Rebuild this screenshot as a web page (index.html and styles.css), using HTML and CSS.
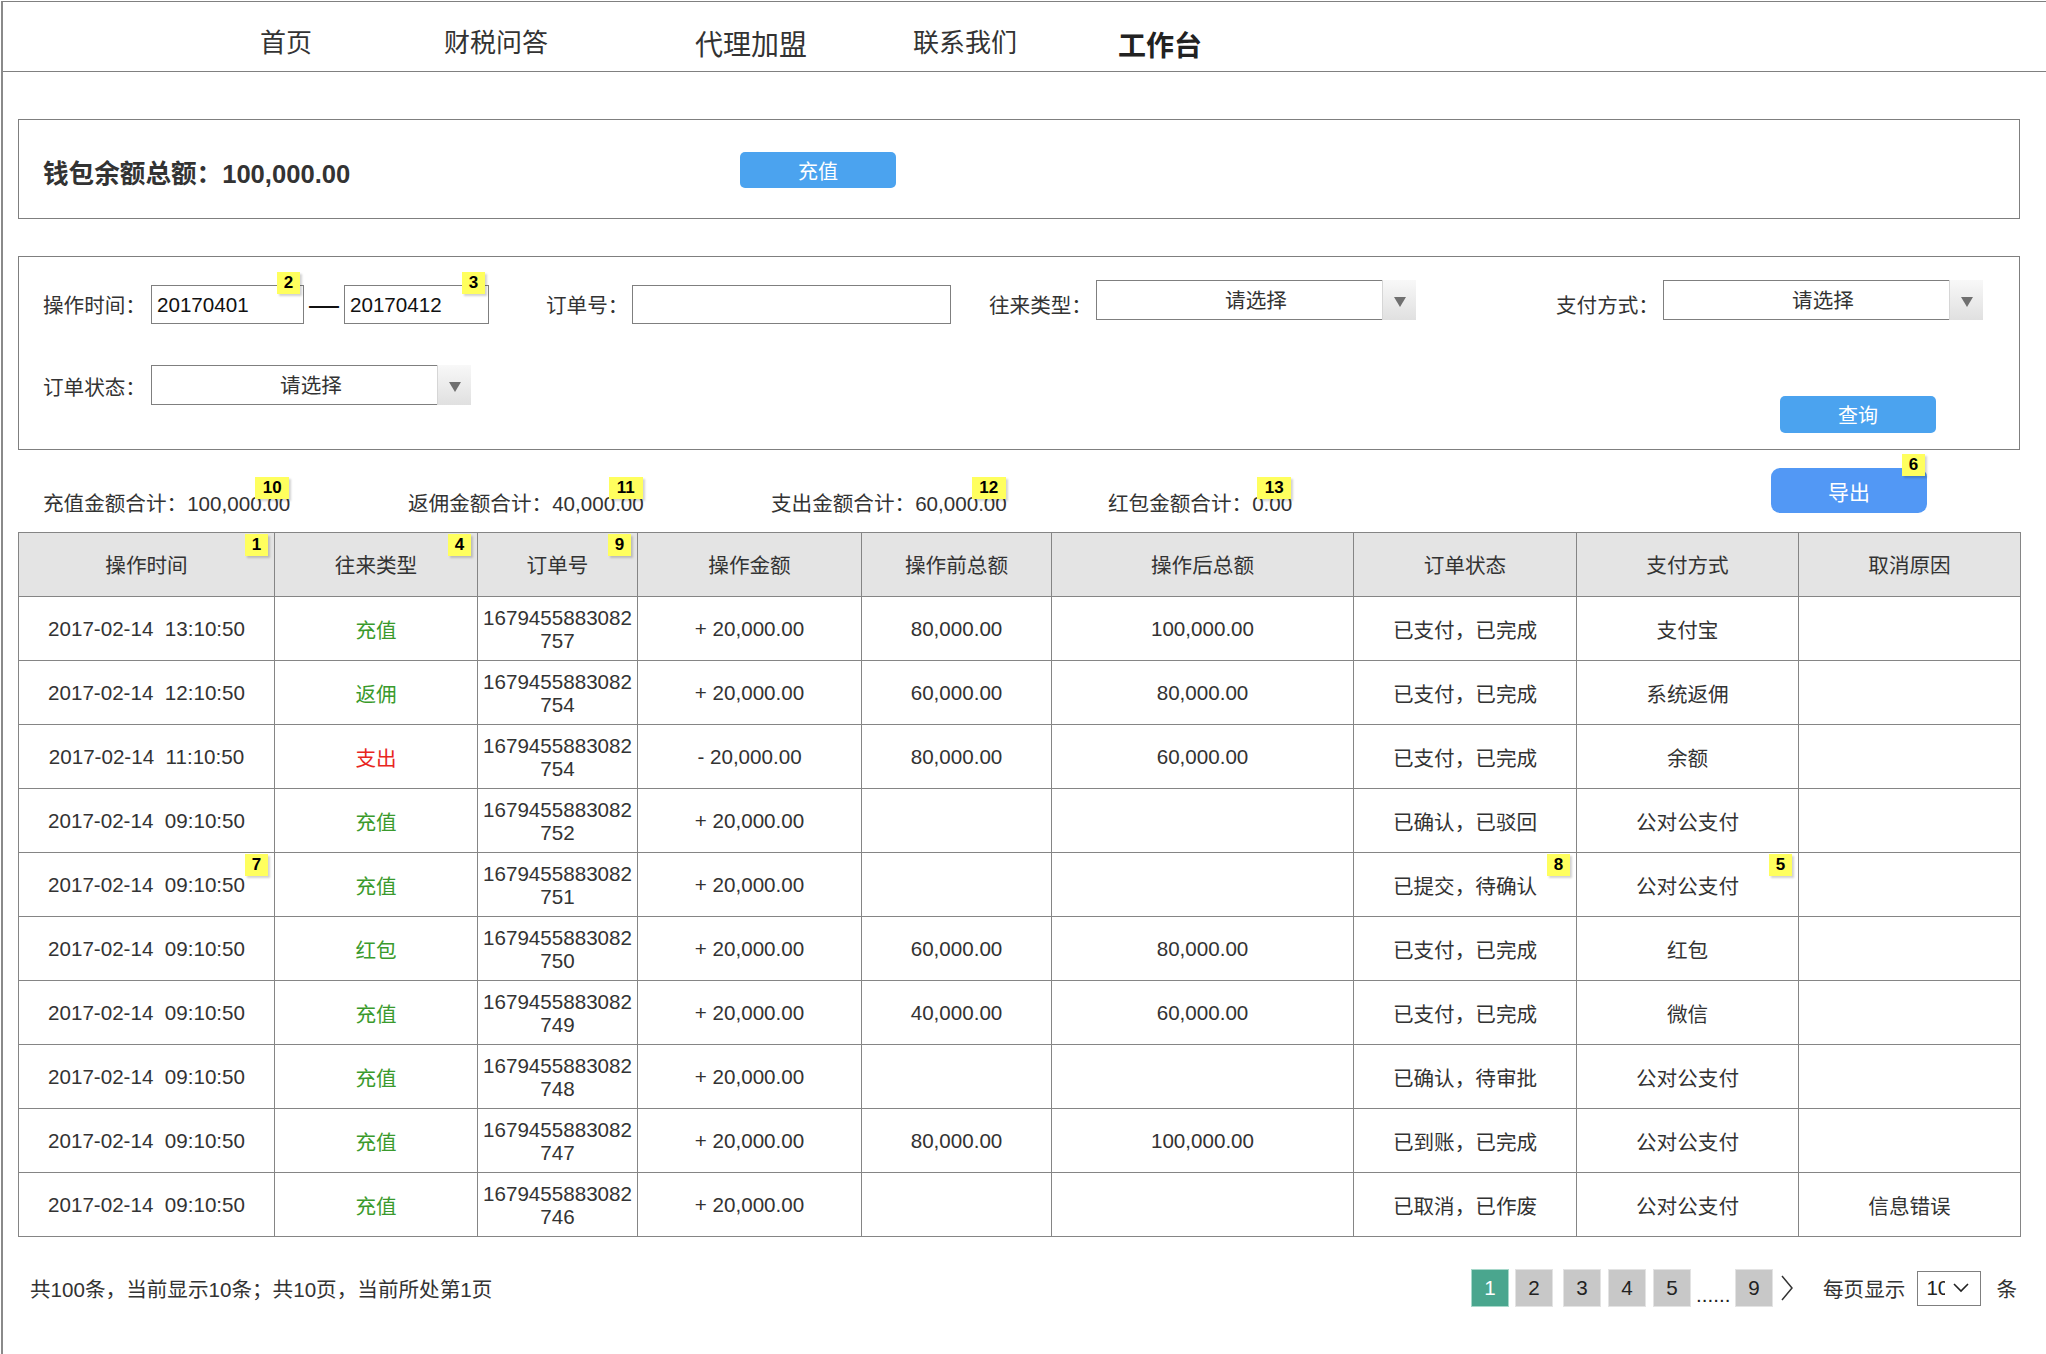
FILE: index.html
```html
<!DOCTYPE html>
<html lang="zh-CN">
<head>
<meta charset="utf-8">
<title>工作台</title>
<link rel="stylesheet" href="styles.css">
</head>
<body>
<div class="frame">
  <nav class="topnav">
    <span class="nav-item n1">首页</span>
    <span class="nav-item n2">财税问答</span>
    <span class="nav-item n3">代理加盟</span>
    <span class="nav-item n4">联系我们</span>
    <span class="nav-item n5">工作台</span>
  </nav>

  <main class="content">
    <section class="wallet">
      <div class="balance">钱包余额总额：100,000.00</div>
      <div class="btn btn-recharge">充值</div>
    </section>

    <section class="filter">
      <div class="frow frow1">
        <div class="flabel w-time">操作时间：</div>
        <div class="tbox date1">20170401<span class="badge b-in">2</span></div>
        <div class="dash">—</div>
        <div class="tbox date2">20170412<span class="badge b-in">3</span></div>
        <div class="flabel w-order">订单号：</div>
        <div class="tbox order"></div>
        <div class="flabel w-type">往来类型：</div>
        <div class="sel"><span class="sel-txt">请选择</span><span class="sel-arrow"><i class="tri"></i></span></div>
        <div class="flabel w-pay">支付方式：</div>
        <div class="sel"><span class="sel-txt">请选择</span><span class="sel-arrow"><i class="tri"></i></span></div>
      </div>
      <div class="frow frow2">
        <div class="flabel w-time">订单状态：</div>
        <div class="sel"><span class="sel-txt">请选择</span><span class="sel-arrow"><i class="tri"></i></span></div>
        <div class="btn btn-query">查询</div>
      </div>
    </section>

    <div class="summary">
      <div class="sum s1"><span class="sum-txt">充值金额合计：100,000.00<span class="badge b-sum wide">10</span></span></div>
      <div class="sum s2"><span class="sum-txt">返佣金额合计：40,000.00<span class="badge b-sum wide">11</span></span></div>
      <div class="sum s3"><span class="sum-txt">支出金额合计：60,000.00<span class="badge b-sum wide">12</span></span></div>
      <div class="sum s4"><span class="sum-txt">红包金额合计：0.00<span class="badge b-sum wide">13</span></span></div>
      <div class="btn btn-export">导出<span class="badge b-export">6</span></div>
    </div>

    <table class="grid">
      <colgroup>
        <col class="c1"><col class="c2"><col class="c3"><col class="c4"><col class="c5"><col class="c6"><col class="c7"><col class="c8"><col class="c9">
      </colgroup>
      <thead>
        <tr>
          <th>操作时间<span class="badge b-cell">1</span></th>
          <th>往来类型<span class="badge b-cell">4</span></th>
          <th>订单号<span class="badge b-cell">9</span></th>
          <th>操作金额</th>
          <th>操作前总额</th>
          <th>操作后总额</th>
          <th>订单状态</th>
          <th>支付方式</th>
          <th>取消原因</th>
        </tr>
      </thead>
      <tbody>
        <tr>
          <td>2017-02-14&nbsp; 13:10:50</td><td class="in">充值</td><td class="ono">1679455883082<br>757</td>
          <td>+ 20,000.00</td><td>80,000.00</td><td>100,000.00</td><td>已支付，已完成</td><td>支付宝</td><td></td>
        </tr>
        <tr>
          <td>2017-02-14&nbsp; 12:10:50</td><td class="in">返佣</td><td class="ono">1679455883082<br>754</td>
          <td>+ 20,000.00</td><td>60,000.00</td><td>80,000.00</td><td>已支付，已完成</td><td>系统返佣</td><td></td>
        </tr>
        <tr>
          <td>2017-02-14&nbsp; 11:10:50</td><td class="out">支出</td><td class="ono">1679455883082<br>754</td>
          <td>- 20,000.00</td><td>80,000.00</td><td>60,000.00</td><td>已支付，已完成</td><td>余额</td><td></td>
        </tr>
        <tr>
          <td>2017-02-14&nbsp; 09:10:50</td><td class="in">充值</td><td class="ono">1679455883082<br>752</td>
          <td>+ 20,000.00</td><td></td><td></td><td>已确认，已驳回</td><td>公对公支付</td><td></td>
        </tr>
        <tr>
          <td>2017-02-14&nbsp; 09:10:50<span class="badge b-cell">7</span></td><td class="in">充值</td><td class="ono">1679455883082<br>751</td>
          <td>+ 20,000.00</td><td></td><td></td><td>已提交，待确认<span class="badge b-cell">8</span></td><td>公对公支付<span class="badge b-cell">5</span></td><td></td>
        </tr>
        <tr>
          <td>2017-02-14&nbsp; 09:10:50</td><td class="in">红包</td><td class="ono">1679455883082<br>750</td>
          <td>+ 20,000.00</td><td>60,000.00</td><td>80,000.00</td><td>已支付，已完成</td><td>红包</td><td></td>
        </tr>
        <tr>
          <td>2017-02-14&nbsp; 09:10:50</td><td class="in">充值</td><td class="ono">1679455883082<br>749</td>
          <td>+ 20,000.00</td><td>40,000.00</td><td>60,000.00</td><td>已支付，已完成</td><td>微信</td><td></td>
        </tr>
        <tr>
          <td>2017-02-14&nbsp; 09:10:50</td><td class="in">充值</td><td class="ono">1679455883082<br>748</td>
          <td>+ 20,000.00</td><td></td><td></td><td>已确认，待审批</td><td>公对公支付</td><td></td>
        </tr>
        <tr>
          <td>2017-02-14&nbsp; 09:10:50</td><td class="in">充值</td><td class="ono">1679455883082<br>747</td>
          <td>+ 20,000.00</td><td>80,000.00</td><td>100,000.00</td><td>已到账，已完成</td><td>公对公支付</td><td></td>
        </tr>
        <tr>
          <td>2017-02-14&nbsp; 09:10:50</td><td class="in">充值</td><td class="ono">1679455883082<br>746</td>
          <td>+ 20,000.00</td><td></td><td></td><td>已取消，已作废</td><td>公对公支付</td><td>信息错误</td>
        </tr>
      </tbody>
    </table>

    <div class="footer">
      <div class="count">共100条，当前显示10条；共10页，当前所处第1页</div>
      <div class="pager">
        <span class="pg active">1</span>
        <span class="pg p2">2</span>
        <span class="pg p3">3</span>
        <span class="pg">4</span>
        <span class="pg">5</span>
        <span class="dots">......</span>
        <span class="pg p9">9</span>
        <svg class="next" width="12" height="26" viewBox="0 0 12 26"><polyline points="1,1 11,13 1,25" fill="none" stroke="#333" stroke-width="1.5"/></svg>
        <span class="per">每页显示</span>
        <span class="persel"><span class="persel-txt">10</span><svg class="persel-arrow" width="16" height="10" viewBox="0 0 16 10"><polyline points="1,1 8,8 15,1" fill="none" stroke="#222" stroke-width="1.6"/></svg></span>
        <span class="unit">条</span>
      </div>
    </div>
  </main>
</div>
</body>
</html>
```

FILE: styles.css
```css
* { box-sizing: border-box; }
html, body { margin: 0; padding: 0; background: #fff; }
body {
  font-family: "Liberation Sans", "Noto Sans CJK SC", sans-serif;
  font-size: 20.6px;
  color: #333;
}

.frame {
  margin: 1px 0 0 1px;
  border-top: 1px solid #808080;
  border-left: 2px solid #8a8a8a;
  min-height: 1353px;
}

/* top navigation */
.topnav {
  height: 70px;
  border-bottom: 1px solid #808080;
  display: flex;
  align-items: center;
  padding-top: 12px;
}
.nav-item { color: #333; font-size: 26px; line-height: 1; white-space: nowrap; }
.n1 { margin-left: 257px; }
.n2 { margin-left: 132px; }
.n3 { margin-left: 147px; font-size: 28px; margin-top: 7px; }
.n4 { margin-left: 106px; }
.n5 { margin-left: 101px; font-size: 28px; font-weight: bold; color: #222; margin-top: 9px; }

.content { margin: 47px 26px 0 15px; }

/* buttons */
.btn {
  position: relative;
  display: flex;
  align-items: center;
  justify-content: center;
  color: #fff;
  font-size: 20px;
  background: #4ba3ef;
  border-radius: 5px;
}

/* wallet */
.wallet {
  height: 100px;
  border: 1px solid #7f7f7f;
  display: flex;
  align-items: center;
  padding: 2px 0 0 24px;
}
.balance { flex: 0 0 697px; font-size: 25.6px; font-weight: bold; color: #333; padding-top: 3px; }
.btn-recharge { width: 156px; height: 36px; }

/* filter */
.filter {
  margin-top: 37px;
  height: 194px;
  border: 1px solid #7f7f7f;
  padding: 23px 0 0 24px;
}
.frow { display: flex; align-items: flex-start; }
.frow2 { margin-top: 35px; }
.flabel { line-height: 44px; padding-top: 4px; white-space: nowrap; color: #333; }
.frow2 .flabel { line-height: 40px; padding-top: 3px; }
.w-time { width: 108px; }
.w-order { width: 86px; margin-left: 57px; }
.w-type { width: 107px; margin-left: 38px; }
.w-pay { width: 107px; margin-left: 140px; }

.tbox {
  position: relative;
  height: 39px;
  margin-top: 5px;
  border: 1px solid #7f7f7f;
  padding-left: 5px;
  line-height: 38px;
  color: #111;
}
.date1 { width: 153px; }
.date2 { width: 145px; }
.order { width: 319px; }
.dash { width: 40px; text-align: center; font-size: 30px; line-height: 50px; color: #111; }

.sel {
  width: 320px;
  height: 40px;
  border: 1px solid #7f7f7f;
  display: flex;
  background: #fff;
}
.sel-txt { flex: 1; text-align: center; padding-left: 33px; line-height: 40px; color: #333; }
.sel-arrow {
  width: 34px;
  margin: -1px -1px -1px 0;
  background: linear-gradient(#f8f8f8, #e0e0e0);
  border-left: 1px solid #d6d6d6;
  display: flex;
  align-items: center;
  justify-content: center;
  padding-top: 3px;
}
.tri {
  width: 0; height: 0;
  border-left: 6px solid transparent;
  border-right: 6px solid transparent;
  border-top: 10px solid #707070;
}

.btn-query { width: 156px; height: 37px; margin: 31px 83px 0 auto; }

/* summary */
.summary {
  margin-top: 18px;
  height: 45px;
  display: flex;
  align-items: flex-end;
}
.sum { line-height: 24px; white-space: nowrap; margin-bottom: -3px; }
.sum-txt { position: relative; }
.s1 { width: 365px; margin-left: 25px; }
.s2 { width: 363px; }
.s3 { width: 337px; }
.btn-export {
  width: 156px; height: 45px;
  margin: 0 93px 0 auto;
  align-self: flex-start;
  background: #5298f5;
  border-radius: 9px;
  font-size: 21px;
}

/* badges */
.badge {
  position: absolute;
  height: 22px;
  min-width: 23px;
  padding: 0 3px;
  background: #ffff5e;
  color: #000;
  font-size: 17px;
  font-weight: bold;
  line-height: 22px;
  text-align: center;
  box-shadow: 2px 2px 2px rgba(0, 0, 0, 0.18);
}
.badge.wide { min-width: 34px; }
.b-in { right: 3px; top: -14px; }
.b-sum { right: 1px; top: -15px; }
.b-export { right: 2px; top: -14px; }
.b-cell { right: 6px; top: 1px; }

/* table */
.grid {
  margin-top: 19px;
  width: 100%;
  border-collapse: collapse;
  table-layout: fixed;
  border: 1px solid #7f7f7f;
}
.c1 { width: 256px; }
.c2 { width: 203px; }
.c3 { width: 160px; }
.c4 { width: 224px; }
.c5 { width: 190px; }
.c6 { width: 302px; }
.c7 { width: 223px; }
.c8 { width: 222px; }
.c9 { width: 222px; }
.grid tr { height: 64px; }
.grid th, .grid td {
  position: relative;
  border: 1px solid #858585;
  text-align: center;
  vertical-align: middle;
  padding: 0;
  font-size: 20.6px;
  color: #333;
  white-space: nowrap;
}
.grid th { background: #e4e4e4; font-weight: normal; padding-bottom: 2px; }
.grid td.ono { line-height: 23px; }
.grid td.in { color: #3a9a2c; }
.grid td.out { color: #e8261e; }

/* footer */
.footer {
  margin-top: 32px;
  height: 38px;
  display: flex;
  align-items: center;
  justify-content: space-between;
}
.count { padding-left: 12px; color: #333; }
.pager { display: flex; align-items: center; margin-right: 3px; }
.pg {
  width: 38px; height: 38px;
  display: flex; align-items: center; justify-content: center;
  background: #c8c8c8;
  border: 1px solid #e3e3e3;
  color: #222;
  margin-left: 7px;
}
.pg.active { background: #4aa68e; border-color: #a7d8ca; color: #fff; margin-left: 0; }
.pg.p2 { margin-left: 6px; }
.pg.p3 { margin-left: 10px; }
.dots { width: 33px; margin-left: 5px; align-self: flex-end; line-height: 24px; color: #222; overflow: visible; white-space: nowrap; }
.pg.p9 { margin-left: 6px; }
.next { margin-left: 8px; }
.per { margin-left: 30px; color: #333; }
.persel {
  margin-left: 12px;
  width: 64px; height: 35px;
  border: 1px solid #7f7f7f;
  display: flex; align-items: center;
  padding-left: 8px;
}
.persel-txt { width: 19px; overflow: hidden; color: #222; }
.persel-arrow { margin-left: 8px; }
.unit { margin-left: 15px; color: #333; }
```
